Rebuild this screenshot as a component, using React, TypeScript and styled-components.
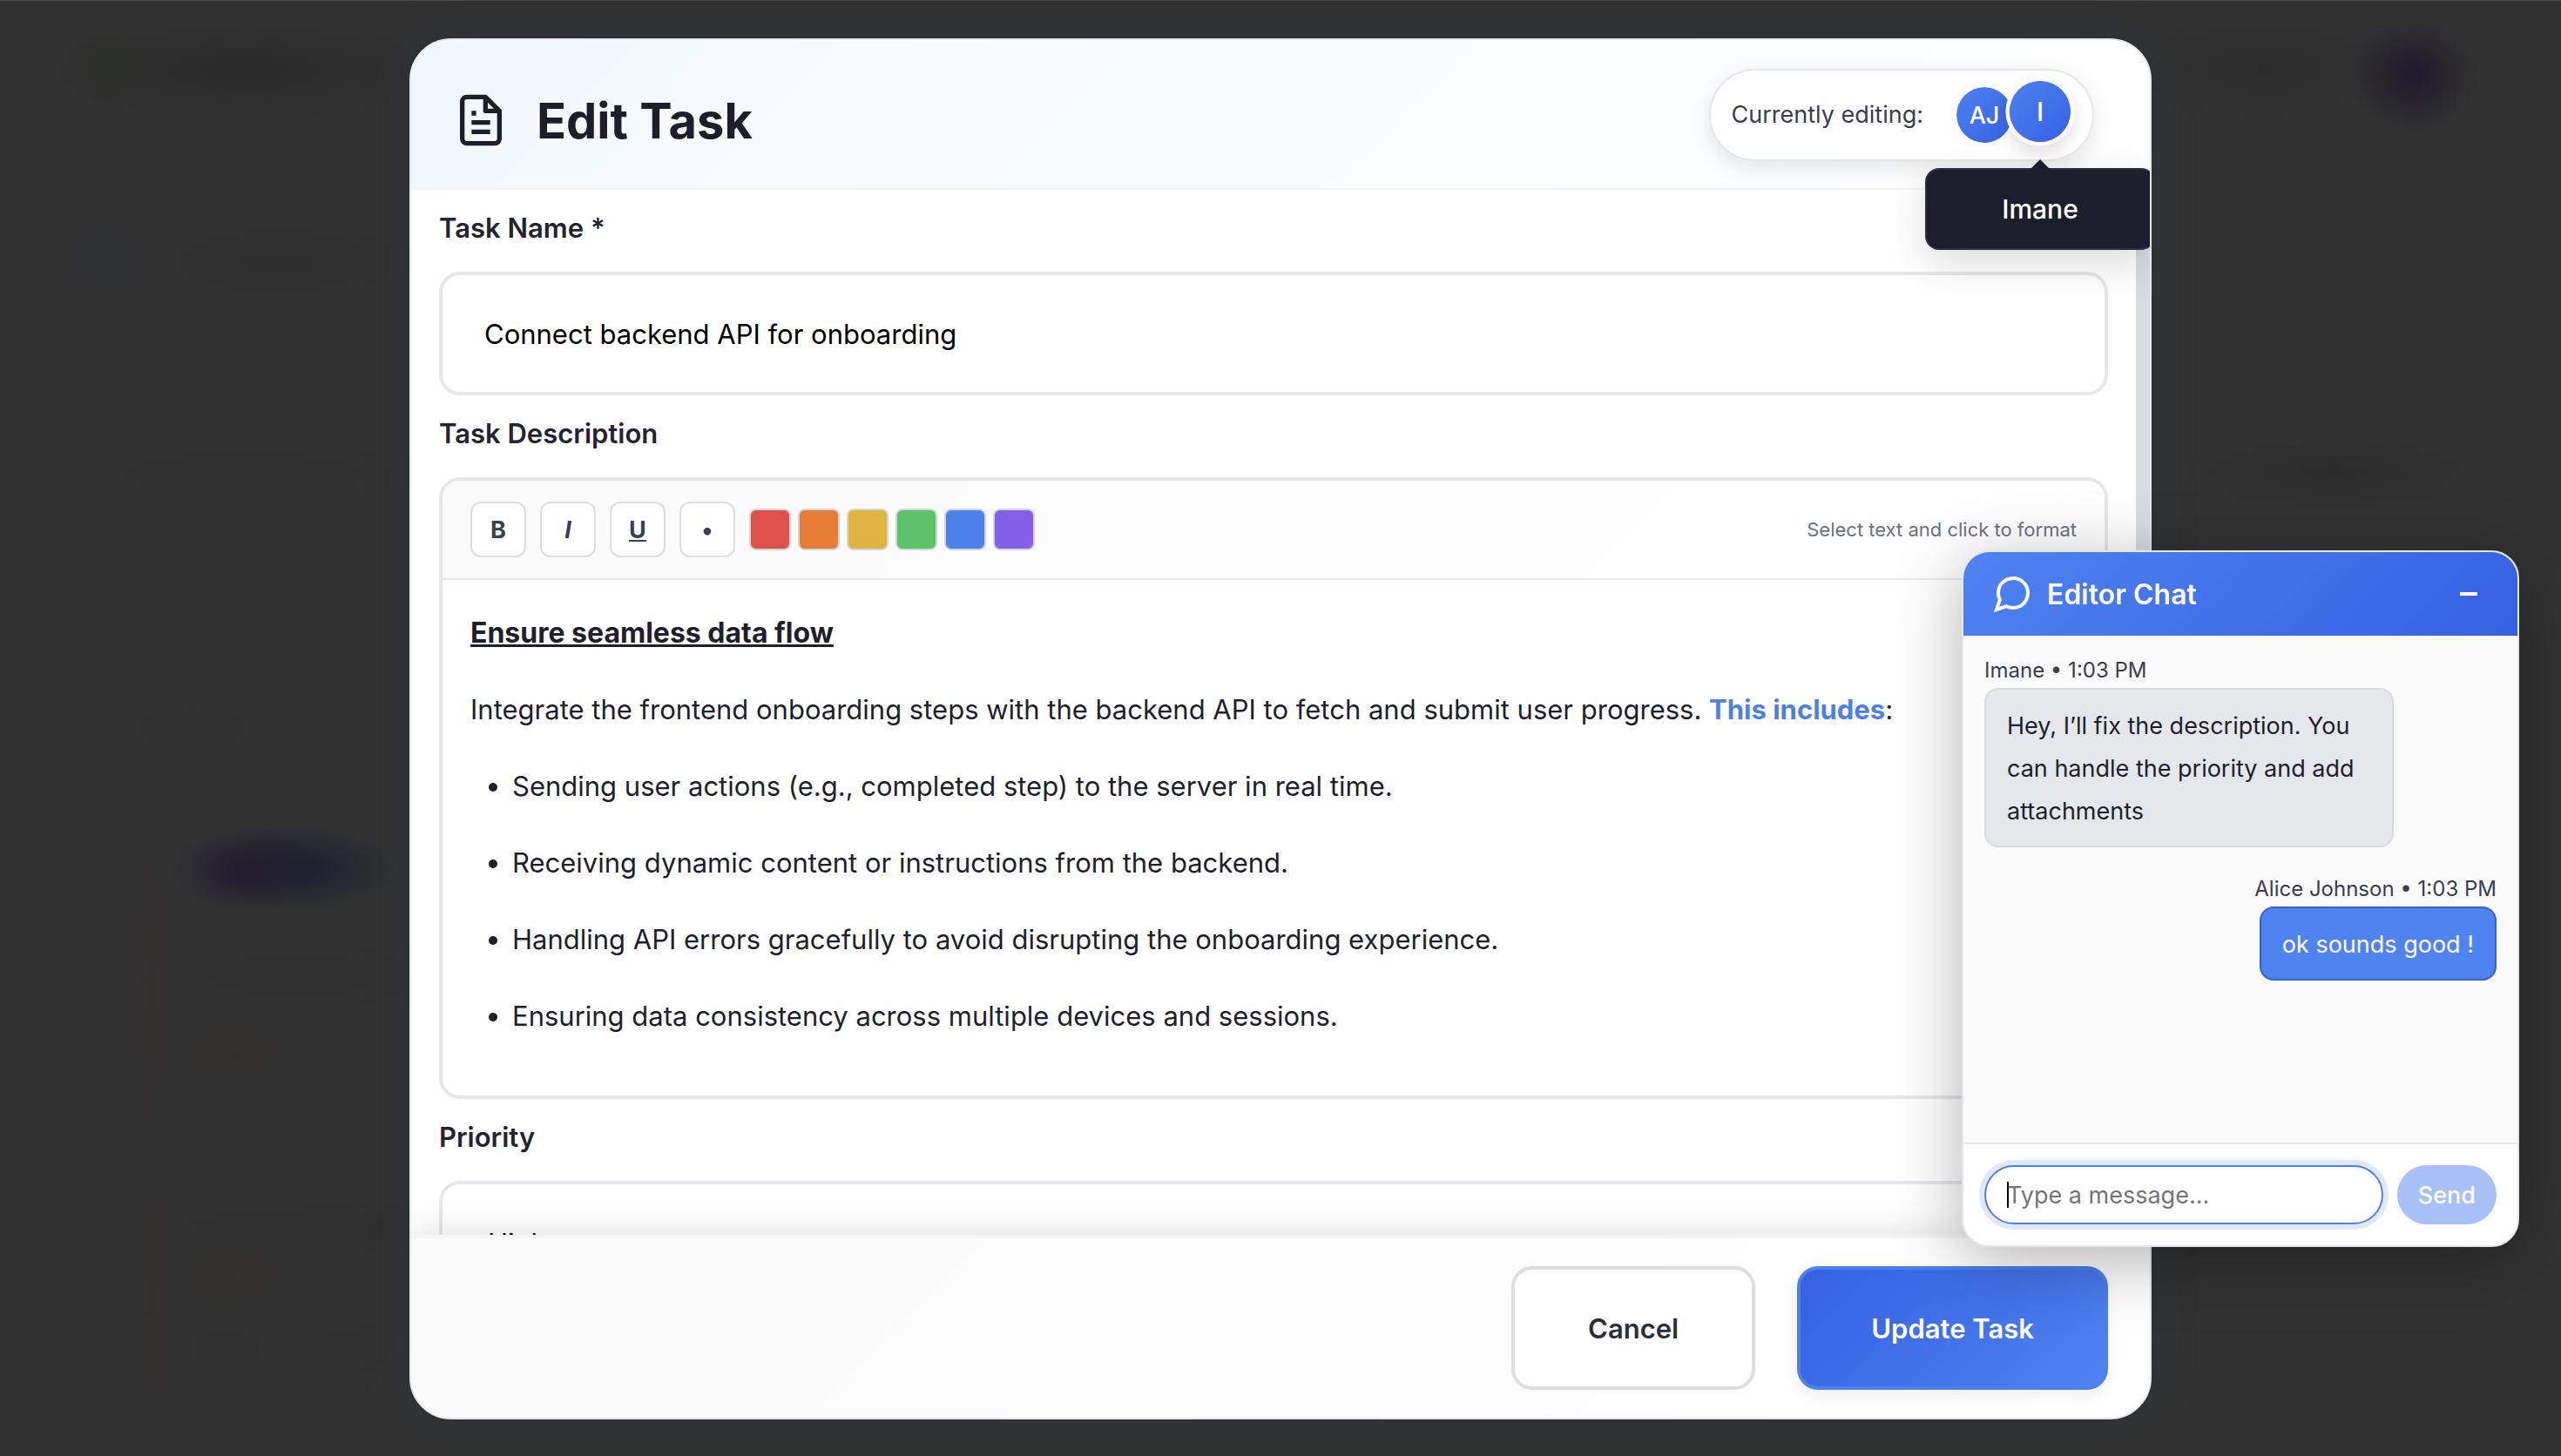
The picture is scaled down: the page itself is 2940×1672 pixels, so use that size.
import React from "react";
import styled, { createGlobalStyle, css } from "styled-components";

const GlobalStyle = createGlobalStyle`
  *, *::before, *::after { box-sizing: border-box; }
  body {
    margin: 0;
    background: #323232;
    font-family: Inter, "Liberation Sans", sans-serif;
    color: #1e1f2b;
  }
  button, input, select { font-family: inherit; margin: 0; }
`;

const Overlay = styled.div`
  position: fixed;
  inset: 0;
  display: flex;
  justify-content: center;
  padding: 43px 48px 42px;
  border-top: 1px solid #4a4a4a;
  background:
    radial-gradient(ellipse 76px 68px at calc(100% - 169px) 85px, #211c2c 10%, transparent 100%),
    radial-gradient(ellipse 90px 50px at 285px 998px, #231e2f 15%, transparent 100%),
    radial-gradient(ellipse 110px 50px at 345px 996px, #1f2231 15%, transparent 100%),
    radial-gradient(ellipse 60px 60px at 126px 80px, #2c2e2b, transparent 100%),
    radial-gradient(ellipse 240px 60px at 280px 80px, #2b2b2b 20%, transparent 100%),
    radial-gradient(ellipse 70px 60px at 120px 290px, #303134, transparent 100%),
    radial-gradient(ellipse 160px 50px at 320px 300px, #2d2d2d, transparent 100%),
    radial-gradient(ellipse 220px 40px at 280px 545px, #2e2e2e, transparent 100%),
    radial-gradient(ellipse 180px 44px at calc(100% - 260px) 540px, #2b2b2b, transparent 100%),
    radial-gradient(ellipse 160px 70px at calc(100% - 340px) 80px, #2c2c2c, transparent 100%),
    radial-gradient(ellipse 100px 40px at 220px 836px, #2e2e2e, transparent 100%),
    radial-gradient(ellipse 200px 50px at 340px 1120px, #2f2f2f, transparent 100%),
    radial-gradient(ellipse 28px 200px at 170px 1130px, #342f2e, transparent 100%),
    radial-gradient(ellipse 28px 170px at 175px 1490px, #342f2e, transparent 100%),
    radial-gradient(ellipse 60px 36px at 270px 1212px, #332f2d, transparent 100%),
    radial-gradient(ellipse 60px 36px at 268px 1468px, #33302c, transparent 100%),
    radial-gradient(ellipse 260px 34px at 380px 1408px, #2e2e2e, transparent 100%),
    radial-gradient(ellipse 80px 34px at 260px 1546px, #2f2f2f, transparent 100%),
    radial-gradient(ellipse 80px 34px at 400px 1546px, #2f2f2f, transparent 100%),
    #323232;
`;

const Modal = styled.section`
  display: flex;
  flex-direction: column;
  width: 100%;
  max-width: 2000px;
  overflow: hidden;
  background: #fff;
  border: 2px solid #e5e7eb;
  border-radius: 48px;
  box-shadow: 0 0 48px rgba(40, 52, 64, 0.4);
`;

const ModalHeader = styled.header`
  position: relative;
  z-index: 2;
  display: flex;
  align-items: center;
  justify-content: space-between;
  flex: none;
  height: 172px;
  padding: 2px 64px 0 48px;
  background: linear-gradient(135deg, #f0f8ff 0%, #f6f9fe 25%, #ffffff 100%);
  border-bottom: 2px solid #f3f4f6;
`;

const TitleGroup = styled.div`
  display: flex;
  align-items: center;
  gap: 32px;
  padding-top: 12px;
`;

const Title = styled.h1`
  margin: 0;
  padding-top: 2px;
  font-size: 56px;
  line-height: 72px;
  font-weight: 700;
  color: #1c1f2b;
`;

const Presence = styled.div`
  display: flex;
  align-items: center;
  gap: 34px;
  height: 106px;
  padding: 0 24px;
  background: #fff;
  border: 2px solid #e5e7eb;
  border-radius: 53px;
  box-shadow: 0 8px 24px rgba(0, 0, 0, 0.1);
`;

const PresenceLabel = styled.span`
  font-size: 27px;
  line-height: 36px;
  color: #3b3d4d;
`;

const AvatarStack = styled.div`
  display: flex;
`;

const AvatarSlot = styled.div`
  position: relative;
  & + & { margin-left: -8px; }
`;

const Avatar = styled.button<{ $raised?: boolean }>`
  display: grid;
  place-items: center;
  width: 72px;
  height: 72px;
  padding: 0;
  border: 4px solid #fff;
  border-radius: 50%;
  background: linear-gradient(135deg, #4f83f0, #3560e2) border-box;
  background-clip: padding-box;
  color: #fff;
  font-size: 27px;
  font-weight: 500;
  ${(p) =>
    p.$raised &&
    css`
      transform: translateY(-4px) scale(1.1);
      box-shadow: 0 8px 16px rgba(0, 0, 0, 0.12);
    `}
`;

const Tooltip = styled.div`
  position: absolute;
  top: calc(100% + 25px);
  left: 50%;
  width: 264px;
  margin-left: -132px;
  padding: 24px;
  background: #1c1f2b;
  border: 2px solid #29303d;
  border-radius: 16px;
  box-shadow: 0 16px 48px rgba(0, 0, 0, 0.14);
  color: #fff;
  font-size: 30px;
  line-height: 42px;
  font-weight: 500;
  text-align: center;

  &::before {
    content: "";
    position: absolute;
    bottom: 100%;
    left: 50%;
    margin-left: -12px;
    border: 12px solid transparent;
    border-top-width: 0;
    border-bottom-color: #1c1f2b;
  }
`;

const ModalBody = styled.div`
  display: flex;
  flex: 1;
  min-height: 0;
`;

const Form = styled.form`
  flex: 1;
  min-width: 0;
  overflow: hidden;
  padding: 18px 32px 0;
`;

const ScrollThumb = styled.div`
  flex: none;
  width: 16px;
  background: #d8dce1;
`;

const Field = styled.div`
  display: flex;
  flex-direction: column;
  gap: 24px;
  margin-bottom: 18px;
`;

const Label = styled.label`
  font-size: 31px;
  line-height: 52px;
  font-weight: 600;
  color: #23242f;
`;

const controlBox = css`
  width: 100%;
  height: 142px;
  border: 4px solid #e5e7eb;
  border-radius: 24px;
  background: #fff;
  font-size: 31px;
  color: #000;
`;

const TextInput = styled.input`
  ${controlBox}
  padding: 0 48px;
`;

const Select = styled.select`
  ${controlBox}
  appearance: none;
  padding: 0 52px;
`;

const Editor = styled.div`
  border: 4px solid #e5e7eb;
  border-radius: 24px;
  overflow: hidden;
  background: #fff;
`;

const Toolbar = styled.div`
  display: flex;
  align-items: center;
  gap: 16px;
  padding: 24px 32px;
  background: linear-gradient(135deg, #fafafa, #ffffff);
  border-bottom: 2px solid #e5e7eb;
`;

const ToolButton = styled.button<{ $italic?: boolean; $underline?: boolean }>`
  width: 64px;
  height: 64px;
  padding: 0;
  border: 2px solid #dcdee2;
  border-radius: 12px;
  background: #fff;
  color: #374151;
  font-size: 27px;
  font-weight: 700;
  font-style: ${(p) => (p.$italic ? "italic" : "normal")};
  text-decoration: ${(p) => (p.$underline ? "underline" : "none")};
`;

const Swatches = styled.div`
  display: flex;
  gap: 8px;
`;

const Swatch = styled.button<{ $color: string }>`
  width: 48px;
  height: 48px;
  padding: 0;
  border: 2px solid #d1d5db;
  border-radius: 8px;
  background: ${(p) => p.$color};
`;

const ToolbarHint = styled.span`
  margin-left: auto;
  font-size: 22px;
  line-height: 32px;
  color: #6b7280;
`;

const RichText = styled.div`
  padding: 33px 32px 31px;
  font-size: 31px;
  line-height: 56px;

  p, ul { margin: 0 0 32px; }
  ul { padding-left: 48px; }
  li { margin-bottom: 32px; }
  u { font-size: 32px; }
  mark { background: none; color: #4d80e6; font-weight: 700; }
`;

const ModalFooter = styled.footer`
  position: relative;
  z-index: 1;
  display: flex;
  justify-content: flex-end;
  gap: 48px;
  flex: none;
  padding: 32px 48px;
  background: linear-gradient(135deg, #fafafa 0%, #ffffff 100%);
  border-top: 4px solid #f5f5f6;
  box-shadow: 0 -8px 32px rgba(0, 0, 0, 0.1);
`;

const ActionButton = styled.button<{ $primary?: boolean }>`
  height: 142px;
  padding: 0 84px;
  border: 4px solid #dcdee2;
  border-radius: 24px;
  background: #fff;
  color: #2a2e38;
  font-size: 31px;
  font-weight: 600;
  ${(p) =>
    p.$primary &&
    css`
      padding: 0 81px;
      border-color: #4b80ee;
      background: linear-gradient(135deg, #3560e2, #4f83f0);
      color: #fff;
      box-shadow: 0 8px 16px rgba(0, 0, 0, 0.06);
    `}
`;

const Chat = styled.aside`
  position: fixed;
  right: 48px;
  bottom: 240px;
  z-index: 5;
  display: flex;
  flex-direction: column;
  width: 640px;
  height: 800px;
  overflow: hidden;
  background: #fff;
  border: 2px solid #e5e7eb;
  border-radius: 32px;
  box-shadow: 0 16px 80px rgba(0, 0, 0, 0.3);
`;

const ChatHeader = styled.header`
  display: flex;
  align-items: center;
  gap: 16px;
  flex: none;
  height: 96px;
  padding: 0 32px;
  background: linear-gradient(135deg, #4f83f0, #3560e2);
  color: #fff;
`;

const ChatTitle = styled.h2`
  flex: 1;
  margin: 0;
  padding-top: 2px;
  font-size: 32px;
  line-height: 48px;
  font-weight: 600;
`;

const MinimizeButton = styled.button`
  display: grid;
  place-items: center;
  width: 48px;
  height: 48px;
  padding: 0;
  border: 0;
  background: none;
  color: inherit;
`;

const Messages = styled.div`
  display: flex;
  flex-direction: column;
  gap: 32px;
  flex: 1;
  padding: 24px;
  background: #fafafa;
`;

const Message = styled.article<{ $own?: boolean }>`
  display: flex;
  flex-direction: column;
  gap: 4px;
  max-width: 80%;
  align-items: ${(p) => (p.$own ? "flex-end" : "flex-start")};
  align-self: ${(p) => (p.$own ? "flex-end" : "flex-start")};
`;

const Meta = styled.span`
  font-size: 24px;
  line-height: 32px;
  color: #3b3d4d;
`;

const Bubble = styled.p<{ $own?: boolean }>`
  margin: 0;
  padding: 17px 24px 15px;
  border: 2px solid ${(p) => (p.$own ? "#3560e2" : "#d8dade")};
  border-radius: 16px;
  background: ${(p) => (p.$own ? "#4f83f0" : "#e5e7eb")};
  color: ${(p) => (p.$own ? "#fff" : "#1e1f2b")};
  font-size: 27px;
  line-height: 49px;
`;

const Composer = styled.form`
  display: flex;
  gap: 16px;
  flex: none;
  padding: 24px;
  border-top: 2px solid #e5e7eb;
  background: #fff;
`;

const MessageField = styled.div`
  position: relative;
  flex: 1;
  display: flex;
`;

const MessageInput = styled.input`
  width: 100%;
  height: 68px;
  padding: 0 24px;
  border: 2px solid #4f80e6;
  border-radius: 34px;
  outline: none;
  box-shadow: 0 0 0 6px #dfe9fb;
  background: #fff;
  font-size: 27px;
  &::placeholder { color: #757575; }
`;

const Caret = styled.span`
  position: absolute;
  left: 26px;
  top: 19px;
  width: 2px;
  height: 30px;
  background: #000;
`;

const SendButton = styled.button`
  height: 68px;
  padding: 0 24px;
  border: 0;
  border-radius: 34px;
  background: #a7c0f7;
  color: #fff;
  font-size: 27px;
  font-weight: 500;
`;

const FileIcon = () => (
  <svg width="64" height="64" viewBox="0 0 24 24" fill="none" stroke="#1c1f2b" strokeWidth="2" strokeLinejoin="round" aria-hidden="true">
    <path d="M14 2H6a2 2 0 0 0-2 2v16a2 2 0 0 0 2 2h12a2 2 0 0 0 2-2V8z" />
    <path d="M14 2v6h6M16 13H8M16 17H8M10 9H8" />
  </svg>
);

const ChatIcon = () => (
  <svg width="48" height="48" viewBox="0 0 24 24" fill="none" stroke="currentColor" strokeWidth="2" aria-hidden="true">
    <path d="M21 11.5a8.38 8.38 0 0 1-.9 3.8 8.5 8.5 0 0 1-7.6 4.7 8.38 8.38 0 0 1-3.8-.9L3 21l1.9-5.7a8.38 8.38 0 0 1-.9-3.8 8.5 8.5 0 0 1 4.7-7.6 8.38 8.38 0 0 1 3.8-.9h.5a8.48 8.48 0 0 1 8 8v.5z" />
  </svg>
);

const MinusIcon = () => (
  <svg width="20" height="4" viewBox="0 0 20 4" fill="currentColor" aria-hidden="true">
    <rect width="20" height="4" />
  </svg>
);

const COLORS = [
  ["Red", "#dc524b"],
  ["Orange", "#e77c35"],
  ["Yellow", "#e0b440"],
  ["Green", "#5ec26b"],
  ["Blue", "#4e80ea"],
  ["Purple", "#855ee8"],
];

const STEPS = [
  "Sending user actions (e.g., completed step) to the server in real time.",
  "Receiving dynamic content or instructions from the backend.",
  "Handling API errors gracefully to avoid disrupting the onboarding experience.",
  "Ensuring data consistency across multiple devices and sessions.",
];

export default function App() {
  return (
    <>
      <GlobalStyle />
      <Overlay>
        <Modal role="dialog" aria-labelledby="dialog-title">
          <ModalHeader>
            <TitleGroup>
              <FileIcon />
              <Title id="dialog-title">Edit Task</Title>
            </TitleGroup>
            <Presence>
              <PresenceLabel>Currently editing:</PresenceLabel>
              <AvatarStack>
                <AvatarSlot>
                  <Avatar type="button">AJ</Avatar>
                </AvatarSlot>
                <AvatarSlot>
                  <Avatar type="button" $raised aria-describedby="editor-name">I</Avatar>
                  <Tooltip id="editor-name" role="tooltip">Imane</Tooltip>
                </AvatarSlot>
              </AvatarStack>
            </Presence>
          </ModalHeader>

          <ModalBody>
            <Form id="task-form" onSubmit={(e) => e.preventDefault()}>
              <Field>
                <Label htmlFor="task-name">Task Name *</Label>
                <TextInput id="task-name" defaultValue="Connect backend API for onboarding" />
              </Field>
              <Field>
                <Label as="span" id="description-label">Task Description</Label>
                <Editor>
                  <Toolbar role="toolbar" aria-label="Formatting">
                    <ToolButton type="button" aria-label="Bold">B</ToolButton>
                    <ToolButton type="button" aria-label="Italic" $italic>I</ToolButton>
                    <ToolButton type="button" aria-label="Underline" $underline>U</ToolButton>
                    <ToolButton type="button" aria-label="Bullet list">•</ToolButton>
                    <Swatches>
                      {COLORS.map(([name, color]) => (
                        <Swatch key={name} type="button" aria-label={name} $color={color} />
                      ))}
                    </Swatches>
                    <ToolbarHint>Select text and click to format</ToolbarHint>
                  </Toolbar>
                  <RichText role="textbox" aria-multiline="true" aria-labelledby="description-label">
                    <p><b><u>Ensure seamless data flow</u></b></p>
                    <p>
                      Integrate the frontend onboarding steps with the backend API to fetch and submit user progress.{" "}
                      <mark>This includes</mark>:
                    </p>
                    <ul>
                      {STEPS.map((step) => <li key={step}>{step}</li>)}
                    </ul>
                  </RichText>
                </Editor>
              </Field>
              <Field>
                <Label htmlFor="priority">Priority</Label>
                <Select id="priority" defaultValue="High">
                  <option>High</option>
                </Select>
              </Field>
            </Form>
            <ScrollThumb aria-hidden="true" />
          </ModalBody>

          <ModalFooter>
            <ActionButton type="button">Cancel</ActionButton>
            <ActionButton type="submit" form="task-form" $primary>Update Task</ActionButton>
          </ModalFooter>
        </Modal>
      </Overlay>

      <Chat aria-label="Editor Chat">
        <ChatHeader>
          <ChatIcon />
          <ChatTitle>Editor Chat</ChatTitle>
          <MinimizeButton type="button" aria-label="Minimize"><MinusIcon /></MinimizeButton>
        </ChatHeader>
        <Messages>
          <Message>
            <Meta>Imane • 1:03 PM</Meta>
            <Bubble>Hey, I’ll fix the description. You can handle the priority and add attachments</Bubble>
          </Message>
          <Message $own>
            <Meta>Alice Johnson • 1:03 PM</Meta>
            <Bubble $own>ok sounds good !</Bubble>
          </Message>
        </Messages>
        <Composer onSubmit={(e) => e.preventDefault()}>
          <MessageField>
            <MessageInput aria-label="Message" placeholder="Type a message..." />
            <Caret aria-hidden="true" />
          </MessageField>
          <SendButton type="submit">Send</SendButton>
        </Composer>
      </Chat>
    </>
  );
}
